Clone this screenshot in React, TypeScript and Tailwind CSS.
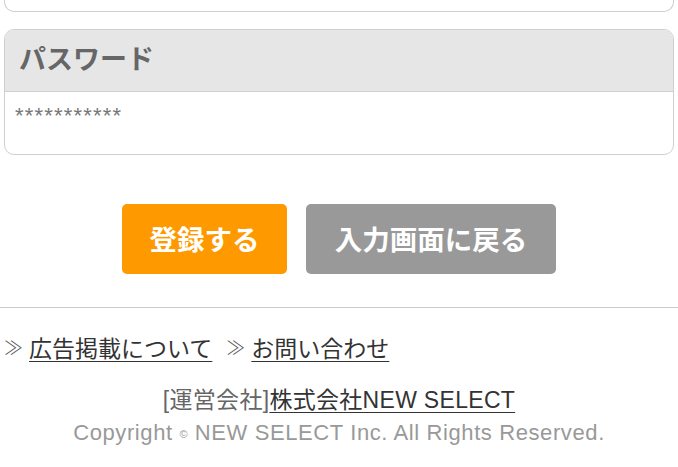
export default function App() {
  return (
    <div
      className="w-[678px] min-h-[467px] bg-white overflow-hidden"
      style={{ fontFamily: '"Liberation Sans", "Noto Sans CJK JP", sans-serif' }}
    >
      {/* tail of the previous field */}
      <div className="mx-[4px] h-[12px] border border-t-0 border-[#cfcfcf] rounded-b-[10px]" />

      {/* password field */}
      <div className="mx-[4px] mt-[17px] border border-[#cfcfcf] rounded-[10px] overflow-hidden">
        <div className="h-[62px] bg-[#e6e6e6] border-b border-[#cfcfcf] px-[14px] pb-[4px] flex items-center">
          <span className="text-[27px] font-bold text-[#666]" style={{ fontFamily: '"Noto Sans CJK JP", sans-serif' }}>
            パスワード
          </span>
        </div>
        <div className="h-[62px] px-[10px] pt-[12px] text-[22px] text-[#777] tracking-[1.2px] leading-[24px]">
          ***********
        </div>
      </div>

      {/* actions */}
      <div className="mt-[49px] flex justify-center gap-[19px]">
        <button className="w-[165px] h-[70px] rounded-[5px] bg-[#ff9900] text-white text-[27.5px] font-bold" style={{ fontFamily: '"Noto Sans CJK JP", sans-serif' }}>
          登録する
        </button>
        <button className="w-[250px] h-[70px] rounded-[5px] bg-[#999999] text-white text-[27.5px] font-bold" style={{ fontFamily: '"Noto Sans CJK JP", sans-serif' }}>
          入力画面に戻る
        </button>
      </div>

      {/* footer */}
      <div className="mt-[33px] border-t border-[#cccccc]">
        <div className="pt-[23px] px-[4px] flex items-center text-[23px] leading-[32px] text-[#333]" style={{ fontFamily: '"Noto Sans CJK JP", sans-serif' }}>
          <span className="text-[#555] text-[19px] font-light mr-[6px]">≫</span>
          <a className="underline underline-offset-[4px] decoration-1">広告掲載について</a>
          <span className="text-[#555] text-[19px] font-light ml-[14px] mr-[6px]">≫</span>
          <a className="underline underline-offset-[4px] decoration-1">お問い合わせ</a>
        </div>
        <div className="mt-[22px] text-center text-[23px] leading-[30px] text-[#666] tracking-[0.3px]">
          [運営会社]<a className="text-[#333] underline underline-offset-[4px] decoration-1">株式会社NEW SELECT</a>
        </div>
        <div className="mt-[3px] text-center text-[22px] leading-[30px] text-[#999] tracking-[0.6px]">
          Copyright <span className="text-[11px] align-middle">©</span> NEW SELECT Inc. All Rights Reserved.
        </div>
      </div>
    </div>
  );
}
